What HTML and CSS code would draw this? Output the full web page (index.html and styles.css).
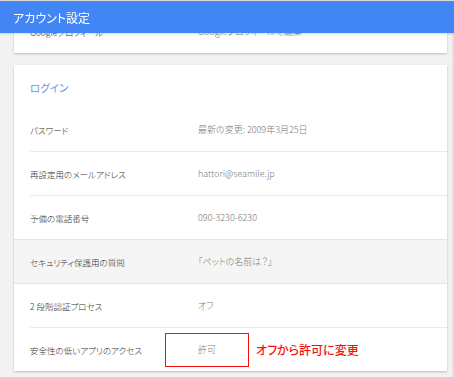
FILE: index.html
```html
<!DOCTYPE html>
<html lang="ja">
<head>
    <meta charset="UTF-8">
    <meta name="viewport" content="width=device-width, initial-scale=1.0">
    <title>アカウント設定</title>
    <link rel="stylesheet" href="styles.css">
</head>
<body>
    <header class="appbar">アカウント設定</header>

    <div class="page">
        <div class="card">
            <div class="row first">
                <span class="label">Googleプロフィール</span>
                <span class="value">Googleプロフィールを編集</span>
            </div>
        </div>

        <div class="card">
            <div class="card-title">ログイン</div>
            <div class="row first">
                <span class="label">パスワード</span>
                <span class="value">最新の変更: 2009年3月25日</span>
            </div>
            <div class="row">
                <span class="label">再設定用のメールアドレス</span>
                <span class="value">hattori@seamile.jp</span>
            </div>
            <div class="row">
                <span class="label">予備の電話番号</span>
                <span class="value">090-3230-6230</span>
            </div>
            <div class="row highlight">
                <span class="label">セキュリティ保護用の質問</span>
                <span class="value">「ペットの名前は？」</span>
            </div>
            <div class="row first">
                <span class="label">2 段階認証プロセス</span>
                <span class="value">オフ</span>
            </div>
            <div class="row">
                <span class="label">安全性の低いアプリのアクセス</span>
                <span class="value marked">許可</span>
                <span class="note">オフから許可に変更</span>
            </div>
        </div>
    </div>
</body>
</html>
```

FILE: styles.css
```css
* {
    box-sizing: border-box;
}

body {
    margin: 0;
    background-color: #f2f2f2;
    font-family: "Noto Sans CJK JP", "Liberation Sans", sans-serif;
    font-feature-settings: "palt";
    border-top: 1px solid #dcdcdc;
    border-right: 2px solid #e2e2e2;
    min-height: 377px;
}

.appbar {
    position: fixed;
    top: 1px;
    left: 0;
    right: 0;
    height: 32px;
    display: flex;
    align-items: center;
    padding-left: 13px;
    background-color: #4285f4;
    color: #fff;
    font-size: 12px;
    box-shadow: 0 1px 2px rgba(0, 0, 0, 0.15);
    z-index: 2;
}

.page {
    padding: 9px 5px 0 14px;
}

.card {
    background-color: #fff;
    box-shadow: 0 1px 2px rgba(0, 0, 0, 0.22);
    margin-bottom: 12px;
}

.card-title {
    height: 43px;
    display: flex;
    align-items: center;
    padding-left: 16px;
    padding-top: 1px;
    color: #6a8ff0;
    font-size: 10.5px;
}

.row {
    height: 44px;
    display: flex;
    align-items: center;
    margin-left: 16px;
    border-top: 1px solid #ebebeb;
    font-size: 8.5px;
    font-weight: 300;
}

.row.first {
    border-top: 0;
    height: 43px;
}

.row.highlight {
    height: 45px;
    margin-left: 0;
    padding-left: 16px;
    border-top: 1px solid #e4e4e4;
    border-bottom: 1px solid #e4e4e4;
    background-color: #f5f5f5;
}

.label {
    width: 168px;
    color: #333;
}

.value {
    color: #7a7a7a;
    font-size: 9px;
}

.value.marked {
    width: 84px;
    height: 34px;
    margin-left: -33px;
    padding-left: 32px;
    display: flex;
    align-items: center;
    border: 1.5px solid #f2140c;
}

.note {
    margin-left: 7px;
    color: #f2140c;
    font-size: 12px;
    font-weight: 500;
}
```
